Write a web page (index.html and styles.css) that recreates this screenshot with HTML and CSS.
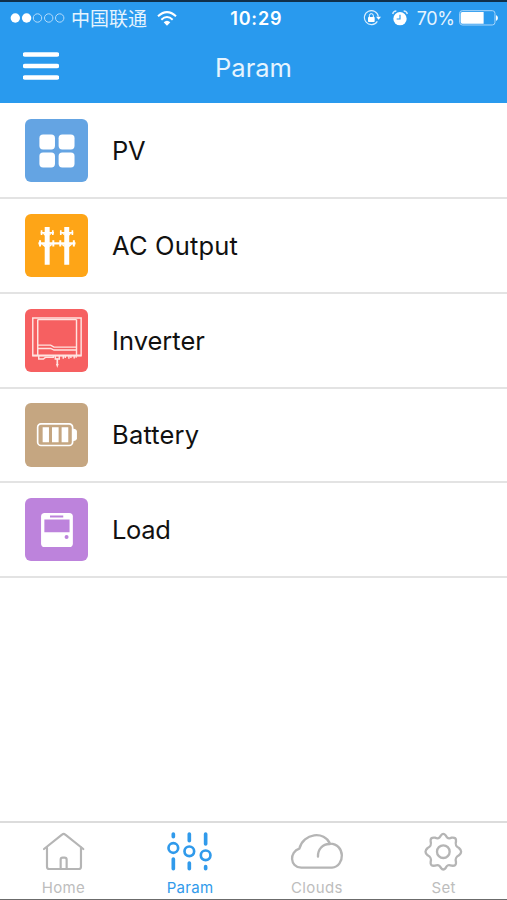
FILE: index.html
```html
<!DOCTYPE html>
<html lang="en">
<head>
<meta charset="utf-8">
<title>Param</title>
<link rel="stylesheet" href="styles.css">
</head>
<body>
<div class="app">
  <header class="header">
    <div class="status">
      <div class="status-left">
        <svg class="signal" viewBox="0 0 55 12"><g fill="#fff"><circle cx="5.3" cy="6" r="4.7"/><circle cx="16.6" cy="6" r="4.7"/></g><g fill="none" stroke="#b5dcfb" stroke-width="1"><circle cx="27.5" cy="6" r="4.2"/><circle cx="38.7" cy="6" r="4.2"/><circle cx="49.7" cy="6" r="4.2"/></g></svg>
        <span class="carrier">中国联通</span>
        <svg class="wifi" viewBox="0 0 60 45"><g fill="none" stroke="#fff" stroke-width="6"><path d="M3 16Q30-9 57 16"/><path d="M13 26Q30 10 47 26"/></g><path d="M20 34Q30 25 40 34L30 44Z" fill="#fff"/></svg>
      </div>
      <span class="time">10:29</span>
      <div class="status-right">
        <svg class="lock" viewBox="0 0 54 48"><path d="M43 34A21 21 0 1 1 46 20" fill="none" stroke="#d8edfd" stroke-width="3.5"/><path d="M39 20H54L47 29Z" fill="#fff"/><rect x="15" y="21" width="20" height="15" rx="2" fill="#fff"/><path d="M19 22V17a6 6 0 0 1 12 0v5" fill="none" stroke="#fff" stroke-width="3"/></svg>
        <svg class="alarm" viewBox="0 0 48 48"><circle cx="24" cy="26" r="20" fill="#fff"/><path d="M2 12Q4 3 13 3M46 12Q44 3 35 3" fill="none" stroke="#d8edfd" stroke-width="4"/><path d="M24 14V27H14" fill="none" stroke="#299aee" stroke-width="3.5"/></svg>
        <span class="percent">70%</span>
        <svg class="power" viewBox="0 0 118 48"><rect x="2" y="2" width="106" height="43" rx="8" fill="none" stroke="#a9d6fa" stroke-width="3"/><path d="M10 6H74V41H10Q5 41 5 36V11Q5 6 10 6Z" fill="#fff"/><path d="M111 15q6 3 6 9t-6 9Z" fill="#fff"/></svg>
      </div>
    </div>
    <div class="navbar">
      <svg class="menu" viewBox="0 0 36 28"><path d="M2 2.5H34M2 14H34M2 25.5H34" stroke="#fff" stroke-width="4.4" stroke-linecap="round"/></svg>
      <h1 class="title">Param</h1>
    </div>
  </header>

  <main class="list">
    <div class="row">
      <svg class="tile pv" viewBox="73 40 191 191"><g fill="#fff"><rect x="116" y="87" width="47" height="45" rx="11"/><rect x="174" y="87" width="48" height="45" rx="11"/><rect x="116" y="141" width="47" height="45" rx="11"/><rect x="174" y="141" width="48" height="45" rx="11"/></g></svg>
      <span class="label tight">PV</span>
    </div>
    <div class="row">
      <svg class="tile ac" viewBox="73 39 191 191"><g fill="#fff"><path d="M132 78h15V192h-15ZM191 78h15V192h-15Z"/><path d="M120 93h40v5h-40ZM178 93h40v5h-40ZM113 124h112v7H113Z"/><path d="M120 88h5v14h-5ZM154 88h5v14h-5ZM178 88h5v14h-5ZM213 88h5v14h-5ZM115 118h6v19h-6ZM155 118h6v19h-6ZM176 118h6v19h-6ZM217 118h6v19h-6Z"/><path d="M122 130L133 139V130ZM157 130L146 139V130ZM181 130L192 139V130ZM216 130L205 139V130ZM125 97L133 105V97ZM154 97L146 105V97ZM184 97L192 105V97ZM213 97L205 105V97Z"/></g></svg>
      <span class="label wide">AC Output</span>
    </div>
    <div class="row">
      <svg class="tile inverter" viewBox="73 39 191 191"><g fill="none" stroke="#ffe3e0" stroke-width="4.4"><path d="M96 66H242V180H96Z"/><path d="M111 71V180M228 71V180M111 71H228"/><path d="M111 148H150L160 154H229M111 158H150L160 163H229"/><path d="M96 179H242" stroke-width="5"/><path d="M114 180V190H128L134 185H158V180M164 181V190H176V181M188 181V189M194 181V187M205 181V189M211 181V187M221 181V188M227 181V186"/><path d="M170 188V209" stroke-width="5"/></g><path d="M166 205h8l-4 12Z" fill="#ffe3e0"/></svg>
      <span class="label">Inverter</span>
    </div>
    <div class="row">
      <svg class="tile battery" viewBox="73 39 191 189"><rect x="111" y="101" width="105" height="65" rx="10" fill="none" stroke="#fff" stroke-width="5"/><path d="M126 111h19v45h-19ZM154 111h20v45h-20ZM183 111h20v45h-20Z" fill="#fff"/><path d="M217 115q12 2 12 9v20q0 7-12 9Z" fill="#fff"/></svg>
      <span class="label wide">Battery</span>
    </div>
    <div class="row">
      <svg class="tile load" viewBox="73 40 191 191"><rect x="121" y="85" width="96" height="103" rx="11" fill="#fff"/><path d="M148 93h40v6h-40ZM131 105h76v38h-76Z" fill="#bd83dc"/><circle cx="198" cy="158" r="6" fill="#bd83dc"/></svg>
      <span class="label tight">Load</span>
    </div>
  </main>

  <nav class="tabs">
    <div class="tab">
      <svg class="tab-icon" viewBox="111 45 160 126"><g fill="none" stroke="#b5b5b5" stroke-width="6.5" stroke-linecap="round" stroke-linejoin="round"><path d="M132 102L186 59Q191 54 196 59L250 102"/><path d="M141 98V155Q141 162 148 162H236Q243 162 243 155V98"/><path d="M182 161V134Q182 128 188 128H194Q200 128 200 134V161"/></g></svg>
      <span>Home</span>
    </div>
    <div class="tab active">
      <svg class="tab-icon" viewBox="490 45 160 126"><g fill="none" stroke="#309aeb"><path d="M521 57V65M521 132V161M569 57V77M569 144V161M618 57V87M618 155V161" stroke-width="11" stroke-linecap="round"/><g stroke-width="8"><circle cx="521" cy="99" r="14.5"/><circle cx="569" cy="109" r="14.5"/><circle cx="618" cy="121" r="14.5"/></g></g></svg>
      <span>Param</span>
    </div>
    <div class="tab">
      <svg class="tab-icon" viewBox="111 45 160 126"><g fill="none" stroke="#b5b5b5" stroke-width="7" stroke-linecap="round" stroke-linejoin="round"><path d="M145 158C109 156 109 110 139 101C151 53 215 47 231 86C278 87 277 154 237 158Z"/><path d="M195 125C194 103 209 86 231 87"/></g></svg>
      <span>Clouds</span>
    </div>
    <div class="tab">
      <svg class="tab-icon" viewBox="490 45 160 126"><g fill="none" stroke="#b5b5b5" stroke-width="7" stroke-linejoin="round"><circle cx="569" cy="110" r="19"/><path d="M562 61Q569 52 576 61C580 70 585 72 594 68Q609 66 607 79C604 90 607 94 616 99Q629 110 616 121C607 126 604 130 607 141Q609 154 594 152C585 148 580 150 576 159Q569 168 562 159C558 150 553 148 544 152Q529 154 531 141C534 130 531 126 522 121Q509 110 522 99C531 94 534 90 531 79Q529 66 544 68C553 72 558 70 562 61Z"/></g></svg>
      <span>Set</span>
    </div>
  </nav>
</div>
</body>
</html>
```
FILE: styles.css
```css
* { box-sizing: border-box; }
body { margin: 0; background: #fff; font-family: Inter, "Noto Sans CJK SC", sans-serif; }
svg { display: block; flex: none; }
.app { width: 507px; height: 900px; display: flex; flex-direction: column; overflow: hidden; border-bottom: 1px solid #6b6b6b; }

.header { height: 102.5px; flex: none; background: #299aee; border-top: 2px solid #10304a; color: #fff; }
.status { display: grid; grid-template-columns: 1fr auto 1fr; align-items: center; height: 32px; padding: 0 8.5px 0 10px; }
.status-left, .status-right { display: flex; align-items: center; }
.status-right { justify-content: flex-end; }
.signal { width: 55px; height: 12px; }
.carrier { margin-left: 6px; font: 19px/30px "Noto Sans CJK SC", sans-serif; height: 30px; color: #e6f4fe; }
.wifi { width: 20px; height: 15px; margin-left: 10px; }
.time { margin-left: 4px; padding-top: 1px; font-size: 18px; font-weight: 600; letter-spacing: .8px; line-height: 30px; }
.lock { width: 18px; height: 16px; }
.alarm { width: 16px; height: 16px; margin-left: 11px; }
.percent { margin-left: 9px; padding-top: 1px; font-size: 18px; line-height: 30px; letter-spacing: -.3px; color: #e6f4fe; }
.power { width: 39.3px; height: 16px; margin-left: 4.5px; }

.navbar { display: grid; grid-template-columns: 60px 1fr 60px; align-items: center; height: 66px; }
.menu { width: 36px; height: 28px; margin: -3px 0 0 23px; }
.title { margin: 0; padding-top: 2px; text-align: center; font-size: 25.5px; font-weight: 400; line-height: 32px; color: #e6f4fe; }

.list { flex: 1; }
.row { display: flex; align-items: center; height: 94.8px; padding-left: 24.5px; border-bottom: 2px solid #e3e3e3; }
.row:first-child { height: 96.5px; padding-top: 2px; }
.tile { width: 63.6px; height: 63.3px; border-radius: 6px; }
.pv { background: #64a4e3; }
.ac { background: #fea517; }
.inverter { background: #f66061; }
.battery { background: #c5a681; }
.load { background: #bd83dc; }
.label { margin-left: 24px; padding-top: 1px; font-size: 25.5px; line-height: 32px; color: #111; white-space: nowrap; }
.wide { letter-spacing: .15px; }
.tight { letter-spacing: -.4px; }

.tabs { display: grid; grid-template-columns: repeat(4, 1fr); height: 78px; flex: none; border-top: 2px solid #dcdcdc; }
.tab { display: flex; flex-direction: column; align-items: center; padding-top: 7px; font-size: 15px; line-height: 18px; letter-spacing: .35px; color: #bdbdbd; }
.tab-icon { width: 53.3px; height: 42px; margin-bottom: 7px; }
.active { color: #309aeb; }
```
